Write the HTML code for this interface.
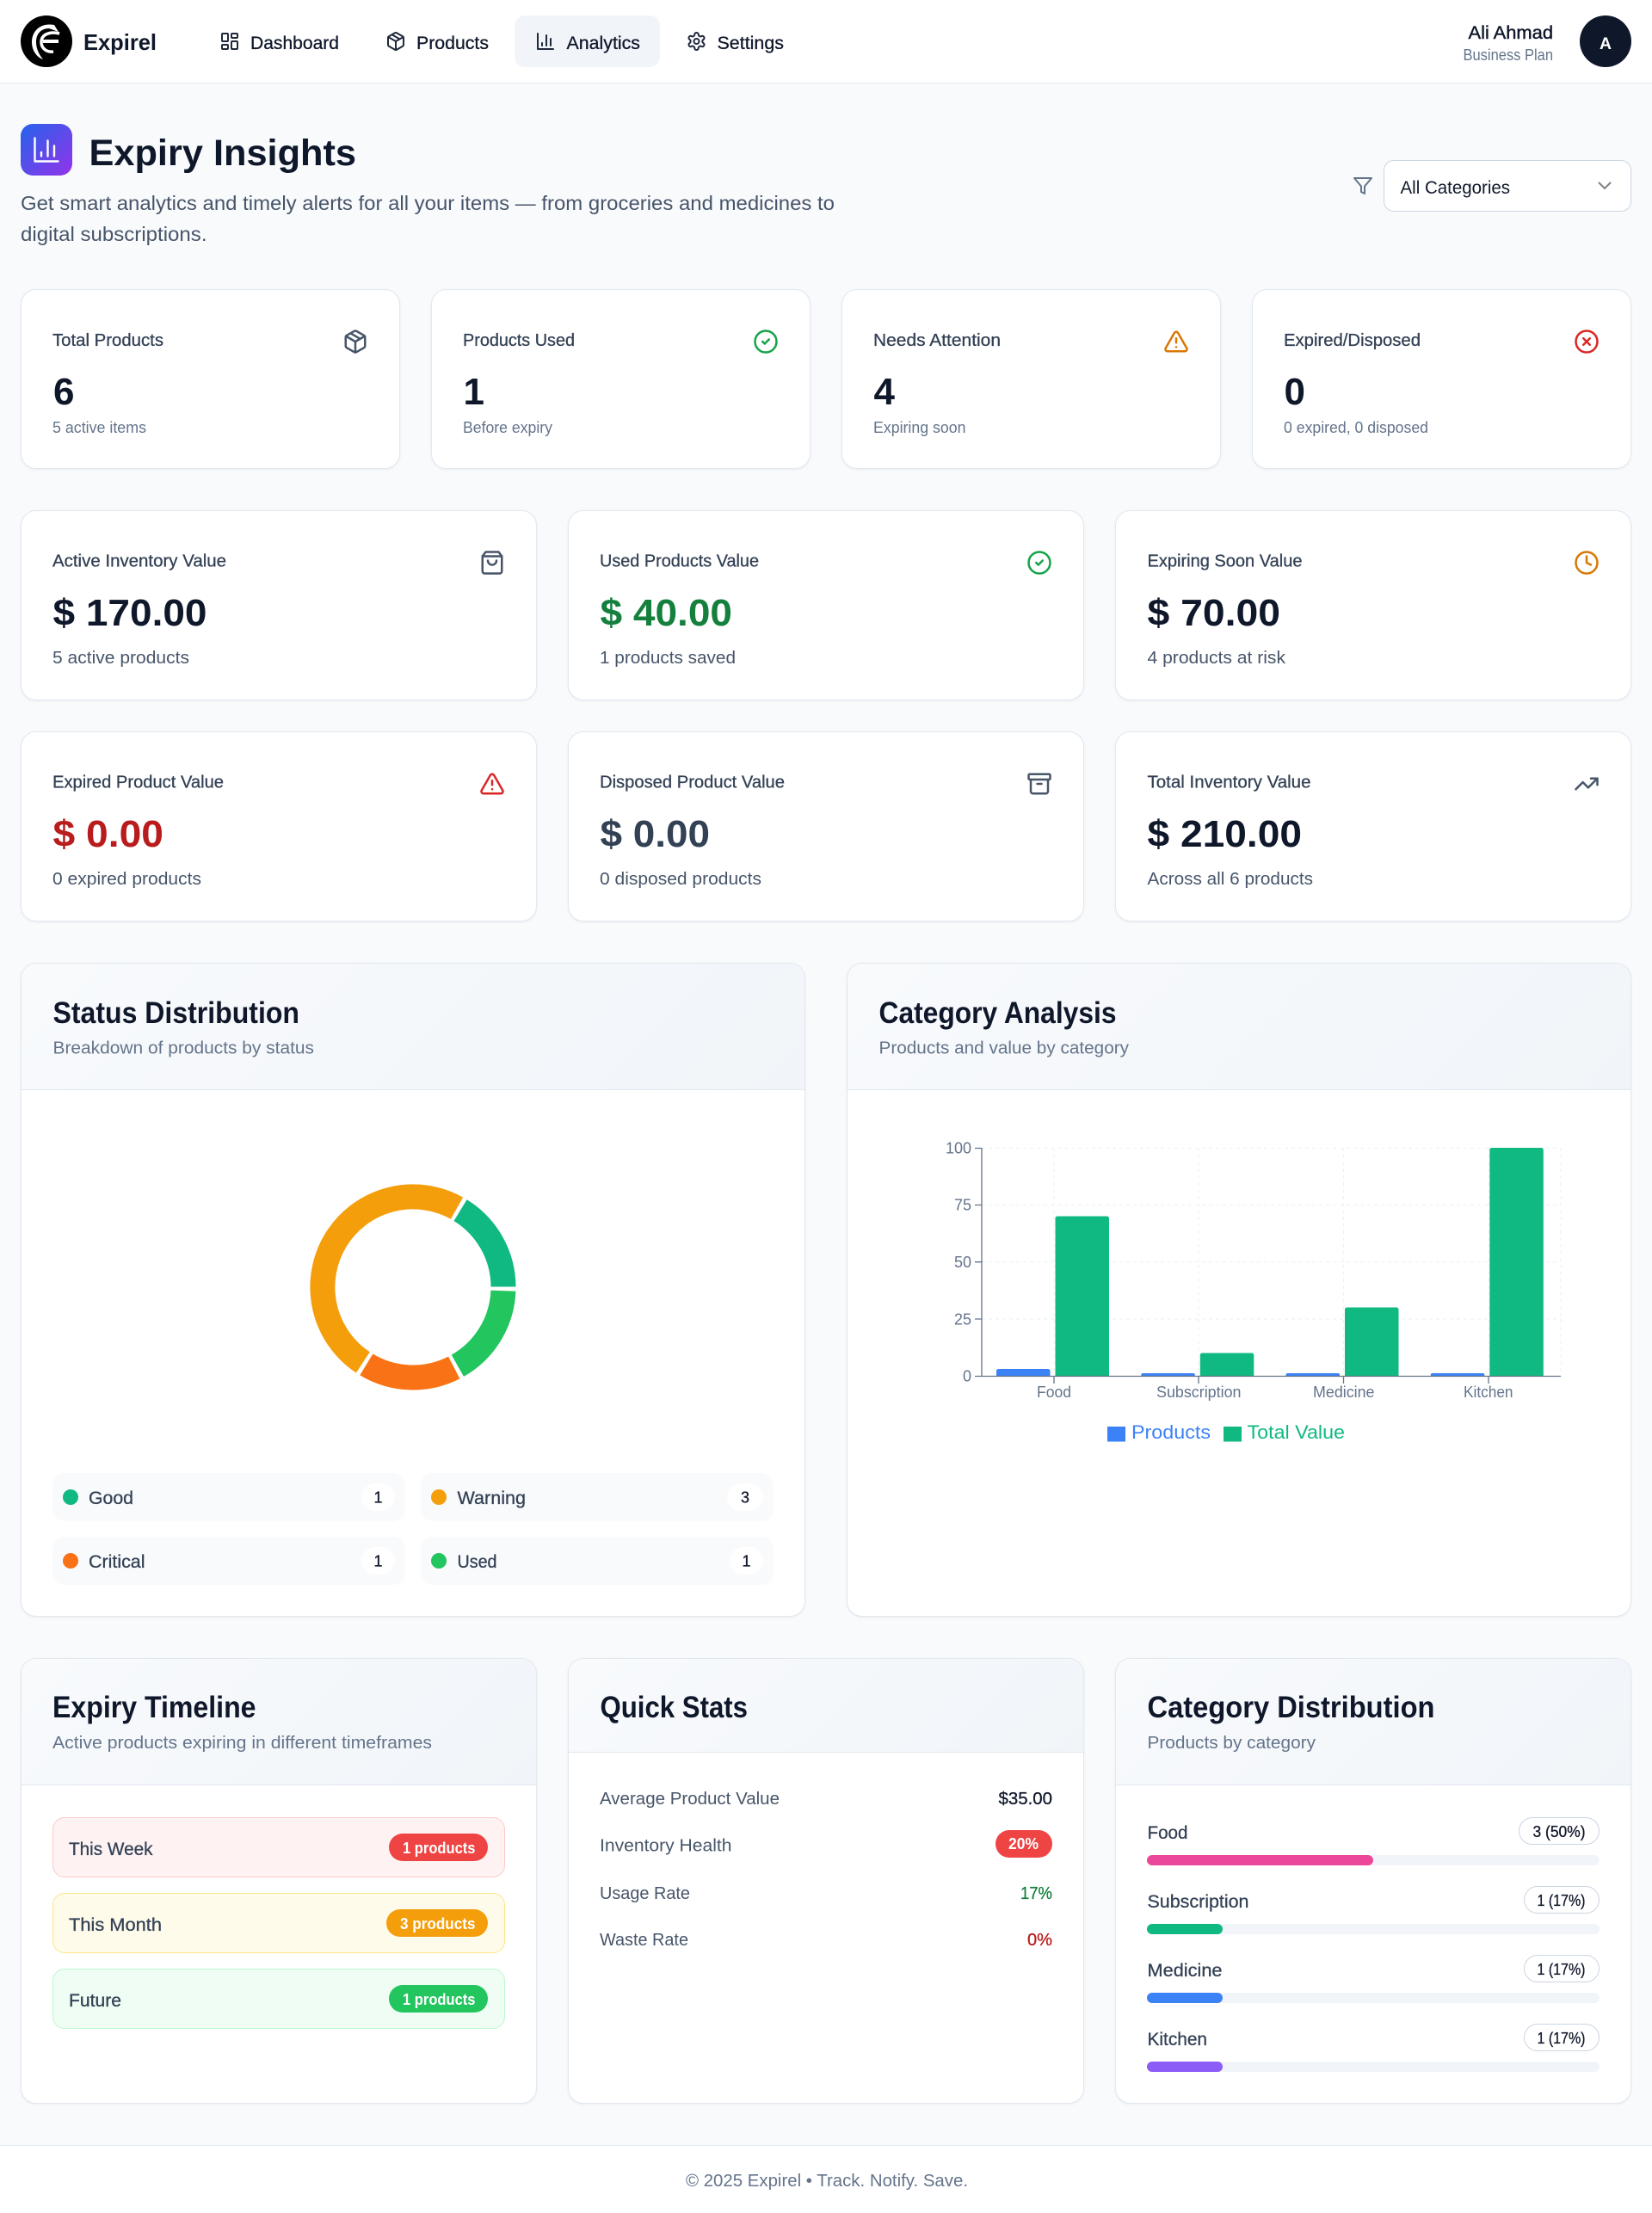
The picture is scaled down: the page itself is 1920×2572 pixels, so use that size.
<!DOCTYPE html>
<html lang="en"><head><meta charset="utf-8"><title>Expiry Insights - Expirel</title>
<style>
html,body{margin:0;padding:0}
body{position:relative;width:1920px;height:2572px;overflow:hidden;background:#f8fafc;font-family:"Liberation Sans",sans-serif}
.a{position:absolute;box-sizing:border-box}
.card{background:#fff;border:1px solid #e2e8f0;border-radius:18px;box-shadow:0 1px 3px rgba(15,23,42,.06);overflow:hidden}
.hd{position:absolute;box-sizing:border-box;left:0;top:0;right:0;background:linear-gradient(135deg,#f8fafc,#f1f5f9);border-bottom:1px solid #e2e8f0}
.tile{background:#f8fafc;border-radius:14px;height:56px}
.dot{width:18px;height:18px;border-radius:50%}
.bdg{background:#fff;border-radius:16px;height:32px}
.pill{border-radius:16px;height:32px}
.it{border-radius:14px;height:70px;left:61px;width:526px;border-style:solid;border-width:1px}
.trk{left:1333px;width:526px;height:12px;background:#f1f5f9;border-radius:6px}
.fil{left:1333px;height:12px;border-radius:6px}
.op{border:1.5px solid #cbd5e1;background:#fff;border-radius:16px;height:32px}
svg text{font-family:"Liberation Sans",sans-serif;white-space:pre}
.m{stroke:currentColor;stroke-width:.3px;fill:currentColor}
.r{fill:currentColor}
.b{font-weight:700;fill:currentColor}
.k0{color:#0f172a}.k1{color:#334155}.k2{color:#475569}.k3{color:#64748b}
.g{color:#15803d}.d{color:#b91c1c}.w{color:#fff}
.i{fill:none;stroke-width:2;stroke-linecap:round;stroke-linejoin:round}
</style></head><body>

<div class="a" style="left:0;top:0;width:1920px;height:97px;background:#fff;border-bottom:1px solid #e2e8f0"></div>
<div class="a" style="left:598px;top:18px;width:169px;height:60px;background:#f1f5f9;border-radius:12px"></div>
<div class="a" style="left:24px;top:144px;width:60px;height:60px;border-radius:14px;background:linear-gradient(135deg,#2563eb,#9333ea)"></div>
<div class="a" style="left:1836px;top:18px;width:60px;height:60px;border-radius:50%;background:#0f172a"></div>
<div class="a" style="left:1608px;top:186px;width:288px;height:60px;background:#fff;border:1px solid #cbd5e1;border-radius:12px"></div>

<div class="a card" style="left:24px;top:336px;width:441px;height:209px"></div>
<div class="a card" style="left:501px;top:336px;width:441px;height:209px"></div>
<div class="a card" style="left:978px;top:336px;width:441px;height:209px"></div>
<div class="a card" style="left:1455px;top:336px;width:441px;height:209px"></div>

<div class="a card" style="left:24px;top:593px;width:600px;height:221px"></div>
<div class="a card" style="left:660px;top:593px;width:600px;height:221px"></div>
<div class="a card" style="left:1296px;top:593px;width:600px;height:221px"></div>
<div class="a card" style="left:24px;top:850px;width:600px;height:221px"></div>
<div class="a card" style="left:660px;top:850px;width:600px;height:221px"></div>
<div class="a card" style="left:1296px;top:850px;width:600px;height:221px"></div>

<div class="a card" style="left:24px;top:1119px;width:912px;height:760px"><div class="hd" style="height:147px"></div></div>
<div class="a card" style="left:984px;top:1119px;width:912px;height:760px"><div class="hd" style="height:147px"></div></div>

<div class="a tile" style="left:61px;top:1712px;width:410px"></div>
<div class="a tile" style="left:489px;top:1712px;width:410px"></div>
<div class="a tile" style="left:61px;top:1786px;width:410px"></div>
<div class="a tile" style="left:489px;top:1786px;width:410px"></div>
<div class="a dot" style="left:73px;top:1731px;background:#10b981"></div>
<div class="a dot" style="left:501px;top:1731px;background:#f59e0b"></div>
<div class="a dot" style="left:73px;top:1805px;background:#f97316"></div>
<div class="a dot" style="left:501px;top:1805px;background:#22c55e"></div>
<div class="a bdg" style="left:420px;top:1724px;width:39px"></div>
<div class="a bdg" style="left:845px;top:1724px;width:42px"></div>
<div class="a bdg" style="left:420px;top:1798px;width:39px"></div>
<div class="a bdg" style="left:848px;top:1798px;width:39px"></div>

<div class="a card" style="left:24px;top:1927px;width:600px;height:518px"><div class="hd" style="height:147px"></div></div>
<div class="a card" style="left:660px;top:1927px;width:600px;height:518px"><div class="hd" style="height:109px"></div></div>
<div class="a card" style="left:1296px;top:1927px;width:600px;height:518px"><div class="hd" style="height:147px"></div></div>

<div class="a it" style="top:2112px;background:#fef2f2;border-color:#fecaca"></div>
<div class="a it" style="top:2200px;background:#fffbeb;border-color:#fde68a"></div>
<div class="a it" style="top:2288px;background:#f0fdf4;border-color:#bbf7d0"></div>
<div class="a pill" style="left:452px;top:2131px;width:115px;background:#ef4444"></div>
<div class="a pill" style="left:449px;top:2219px;width:118px;background:#f59e0b"></div>
<div class="a pill" style="left:452px;top:2307px;width:115px;background:#22c55e"></div>
<div class="a pill" style="left:1157px;top:2127px;width:66px;background:#ef4444"></div>

<div class="a op" style="left:1765px;top:2112px;width:94px"></div>
<div class="a op" style="left:1771px;top:2192px;width:88px"></div>
<div class="a op" style="left:1771px;top:2272px;width:88px"></div>
<div class="a op" style="left:1771px;top:2352px;width:88px"></div>
<div class="a trk" style="top:2156px"></div><div class="a fil" style="top:2156px;width:263px;background:#ec4899"></div>
<div class="a trk" style="top:2236px"></div><div class="a fil" style="top:2236px;width:88px;background:#10b981"></div>
<div class="a trk" style="top:2316px"></div><div class="a fil" style="top:2316px;width:88px;background:#3b82f6"></div>
<div class="a trk" style="top:2396px"></div><div class="a fil" style="top:2396px;width:88px;background:#8b5cf6"></div>

<div class="a" style="left:0;top:2493px;width:1920px;height:79px;background:#fff;border-top:1px solid #e2e8f0"></div>

<svg class="a" style="left:0;top:0" width="1920" height="2572" viewBox="0 0 1920 2572" xmlns="http://www.w3.org/2000/svg">
<defs>
<symbol id="dash" viewBox="0 0 24 24"><rect x="3" y="3" width="7" height="9" rx="1"/><rect x="14" y="3" width="7" height="5" rx="1"/><rect x="14" y="12" width="7" height="9" rx="1"/><rect x="3" y="16" width="7" height="5" rx="1"/></symbol>
<symbol id="pkg" viewBox="0 0 24 24"><path d="m7.5 4.27 9 5.15"/><path d="M21 8a2 2 0 0 0-1-1.73l-7-4a2 2 0 0 0-2 0l-7 4A2 2 0 0 0 3 8v8a2 2 0 0 0 1 1.73l7 4a2 2 0 0 0 2 0l7-4A2 2 0 0 0 21 16Z"/><path d="m3.3 7 8.7 5 8.7-5"/><path d="M12 22V12"/></symbol>
<symbol id="bars" viewBox="0 0 24 24"><path d="M3 3v18h18"/><path d="M18 17V9"/><path d="M13 17V5"/><path d="M8 17v-3"/></symbol>
<symbol id="gear" viewBox="0 0 24 24"><path d="M12.22 2h-.44a2 2 0 0 0-2 2v.18a2 2 0 0 1-1 1.73l-.43.25a2 2 0 0 1-2 0l-.15-.08a2 2 0 0 0-2.73.73l-.22.38a2 2 0 0 0 .73 2.73l.15.1a2 2 0 0 1 1 1.72v.51a2 2 0 0 1-1 1.74l-.15.09a2 2 0 0 0-.73 2.73l.22.38a2 2 0 0 0 2.73.73l.15-.08a2 2 0 0 1 2 0l.43.25a2 2 0 0 1 1 1.73V20a2 2 0 0 0 2 2h.44a2 2 0 0 0 2-2v-.18a2 2 0 0 1 1-1.73l.43-.25a2 2 0 0 1 2 0l.15.08a2 2 0 0 0 2.73-.73l.22-.39a2 2 0 0 0-.73-2.73l-.15-.08a2 2 0 0 1-1-1.74v-.5a2 2 0 0 1 1-1.74l.15-.09a2 2 0 0 0 .73-2.73l-.22-.38a2 2 0 0 0-2.73-.73l-.15.08a2 2 0 0 1-2 0l-.43-.25a2 2 0 0 1-1-1.73V4a2 2 0 0 0-2-2z"/><circle cx="12" cy="12" r="3"/></symbol>
<symbol id="filt" viewBox="0 0 24 24"><polygon points="22 3 2 3 10 12.46 10 19 14 21 14 12.46 22 3"/></symbol>
<symbol id="chk" viewBox="0 0 24 24"><circle cx="12" cy="12" r="10"/><path d="m9 12 2 2 4-4"/></symbol>
<symbol id="warn" viewBox="0 0 24 24"><path d="m21.73 18-8-14a2 2 0 0 0-3.48 0l-8 14A2 2 0 0 0 4 21h16a2 2 0 0 0 1.73-3Z"/><path d="M12 9v4"/><path d="M12 17h.01"/></symbol>
<symbol id="xc" viewBox="0 0 24 24"><circle cx="12" cy="12" r="10"/><path d="m15 9-6 6"/><path d="m9 9 6 6"/></symbol>
<symbol id="bag" viewBox="0 0 24 24"><path d="M6 2 3 6v14a2 2 0 0 0 2 2h14a2 2 0 0 0 2-2V6l-3-4Z"/><path d="M3 6h18"/><path d="M16 10a4 4 0 0 1-8 0"/></symbol>
<symbol id="clk" viewBox="0 0 24 24"><circle cx="12" cy="12" r="10"/><polyline points="12 6 12 12 16 14"/></symbol>
<symbol id="arc" viewBox="0 0 24 24"><rect x="2" y="3" width="20" height="5" rx="1"/><path d="M4 8v11a2 2 0 0 0 2 2h12a2 2 0 0 0 2-2V8"/><path d="M10 12h4"/></symbol>
<symbol id="trn" viewBox="0 0 24 24"><polyline points="22 7 13.5 15.5 8.5 10.5 2 17"/><polyline points="16 7 22 7 22 13"/></symbol>
</defs>

<!-- logo -->
<circle cx="54" cy="48" r="30" fill="#000"/>
<path d="M63 29C47 26 37 36 37 49C37 60 44 67 50 69C45 63 42 56 42 49C42 39 48 33 57 33L68 37Z" fill="#fff"/>
<path d="M69 39C58 36 48 40 48 49C48 56 54 61 62 60" fill="none" stroke="#fff" stroke-width="3.5"/>
<path d="M50 48H68" stroke="#fff" stroke-width="4"/>

<text class="b k0" x="97" y="58" font-size="26" textLength="85" lengthAdjust="spacingAndGlyphs">Expirel</text>

<!-- nav -->
<use href="#dash" x="255" y="36" width="24" height="24" class="i" stroke="#1e293b"/>
<use href="#pkg" x="448" y="36" width="24" height="24" class="i" stroke="#1e293b"/>
<use href="#bars" x="622" y="36" width="24" height="24" class="i" stroke="#1e293b"/>
<use href="#gear" x="797.5" y="36" width="24" height="24" class="i" stroke="#1e293b"/>
<text class="m k0" x="291" y="57" font-size="21.5" textLength="103" lengthAdjust="spacingAndGlyphs">Dashboard</text>
<text class="m k0" x="484" y="57" font-size="21.5" textLength="84" lengthAdjust="spacingAndGlyphs">Products</text>
<text class="m k0" x="658.5" y="57" font-size="21.5" textLength="85.5" lengthAdjust="spacingAndGlyphs">Analytics</text>
<text class="m k0" x="833.5" y="57" font-size="21.5" textLength="77.5" lengthAdjust="spacingAndGlyphs">Settings</text>

<text class="m k0" x="1706.5" y="45" font-size="21.5" textLength="98.5" lengthAdjust="spacingAndGlyphs" style="stroke-width:.45px">Ali Ahmad</text>
<text class="r k3" x="1700.5" y="70" font-size="18" textLength="104.5" lengthAdjust="spacingAndGlyphs">Business Plan</text>
<text class="b w" x="1859" y="57" font-size="19" textLength="14" lengthAdjust="spacingAndGlyphs">A</text>

<!-- title -->
<use href="#bars" x="36" y="156" width="36" height="36" class="i" stroke="#fff" style="stroke-width:1.6"/>
<text class="b k0" x="103.5" y="192" font-size="43" textLength="310.5" lengthAdjust="spacingAndGlyphs">Expiry Insights</text>
<text class="r k2" x="24" y="244" font-size="23.5" textLength="946" lengthAdjust="spacingAndGlyphs">Get smart analytics and timely alerts for all your items — from groceries and medicines to</text>
<text class="r k2" x="24" y="280" font-size="23.5" textLength="216.5" lengthAdjust="spacingAndGlyphs">digital subscriptions.</text>

<use href="#filt" x="1572" y="204" width="24" height="24" class="i" stroke="#64748b"/>
<text class="r k0" x="1627.5" y="225" font-size="21.5" textLength="127.5" lengthAdjust="spacingAndGlyphs">All Categories</text>
<path d="M1858 212l7 7 7-7" fill="none" stroke="#808080" stroke-width="2"/>

<!-- stat cards -->
<use href="#pkg" x="398" y="382" width="30" height="30" class="i" stroke="#475569"/>
<use href="#chk" x="875" y="382" width="30" height="30" class="i" stroke="#16a34a"/>
<use href="#warn" x="1352" y="382" width="30" height="30" class="i" stroke="#d97706"/>
<use href="#xc" x="1829" y="382" width="30" height="30" class="i" stroke="#dc2626"/>
<text class="m k1" x="61" y="402" font-size="20" textLength="129" lengthAdjust="spacingAndGlyphs">Total Products</text>
<text class="m k1" x="538" y="402" font-size="20" textLength="130" lengthAdjust="spacingAndGlyphs">Products Used</text>
<text class="m k1" x="1015" y="402" font-size="20" textLength="148" lengthAdjust="spacingAndGlyphs">Needs Attention</text>
<text class="m k1" x="1492" y="402" font-size="20" textLength="159" lengthAdjust="spacingAndGlyphs">Expired/Disposed</text>
<text class="b k0" x="62" y="470" font-size="44">6</text>
<text class="b k0" x="538.5" y="470" font-size="44">1</text>
<text class="b k0" x="1015.5" y="470" font-size="44">4</text>
<text class="b k0" x="1492.5" y="470" font-size="44">0</text>
<text class="r k3" x="61" y="503" font-size="18" textLength="109" lengthAdjust="spacingAndGlyphs">5 active items</text>
<text class="r k3" x="538" y="503" font-size="18" textLength="104" lengthAdjust="spacingAndGlyphs">Before expiry</text>
<text class="r k3" x="1015" y="503" font-size="18" textLength="107.500" lengthAdjust="spacingAndGlyphs">Expiring soon</text>
<text class="r k3" x="1492" y="503" font-size="18" textLength="168" lengthAdjust="spacingAndGlyphs">0 expired, 0 disposed</text>

<!-- value cards -->
<use href="#bag" x="557" y="639" width="30" height="30" class="i" stroke="#475569"/>
<use href="#chk" x="1193" y="639" width="30" height="30" class="i" stroke="#16a34a"/>
<use href="#clk" x="1829" y="639" width="30" height="30" class="i" stroke="#d97706"/>
<use href="#warn" x="557" y="896" width="30" height="30" class="i" stroke="#dc2626"/>
<use href="#arc" x="1193" y="896" width="30" height="30" class="i" stroke="#475569"/>
<use href="#trn" x="1829" y="896" width="30" height="30" class="i" stroke="#475569"/>
<text class="m k1" x="61" y="658.5" font-size="20" textLength="202" lengthAdjust="spacingAndGlyphs">Active Inventory Value</text>
<text class="m k1" x="697" y="658.5" font-size="20" textLength="185" lengthAdjust="spacingAndGlyphs">Used Products Value</text>
<text class="m k1" x="1333.5" y="658.5" font-size="20" textLength="180" lengthAdjust="spacingAndGlyphs">Expiring Soon Value</text>
<text class="m k1" x="61" y="915.5" font-size="20" textLength="199" lengthAdjust="spacingAndGlyphs">Expired Product Value</text>
<text class="m k1" x="697" y="915.5" font-size="20" textLength="215" lengthAdjust="spacingAndGlyphs">Disposed Product Value</text>
<text class="m k1" x="1333.5" y="915.5" font-size="20" textLength="190" lengthAdjust="spacingAndGlyphs">Total Inventory Value</text>
<text class="b k0" x="61.5" y="727" font-size="44" textLength="179" lengthAdjust="spacingAndGlyphs">$ 170.00</text>
<text class="b g" x="697.5" y="727" font-size="44" textLength="153.5" lengthAdjust="spacingAndGlyphs">$ 40.00</text>
<text class="b k0" x="1333.5" y="727" font-size="44" textLength="154.5" lengthAdjust="spacingAndGlyphs">$ 70.00</text>
<text class="b d" x="61.5" y="984" font-size="44" textLength="128.5" lengthAdjust="spacingAndGlyphs">$ 0.00</text>
<text class="b k1" x="697.5" y="984" font-size="44" textLength="127.5" lengthAdjust="spacingAndGlyphs">$ 0.00</text>
<text class="b k0" x="1333.5" y="984" font-size="44" textLength="179.5" lengthAdjust="spacingAndGlyphs">$ 210.00</text>
<text class="r k2" x="61" y="771" font-size="20.5" textLength="159" lengthAdjust="spacingAndGlyphs">5 active products</text>
<text class="r k2" x="697" y="771" font-size="20.5" textLength="158" lengthAdjust="spacingAndGlyphs">1 products saved</text>
<text class="r k2" x="1333.5" y="771" font-size="20.5" textLength="160.5" lengthAdjust="spacingAndGlyphs">4 products at risk</text>
<text class="r k2" x="61" y="1028" font-size="20.5" textLength="173" lengthAdjust="spacingAndGlyphs">0 expired products</text>
<text class="r k2" x="697" y="1028" font-size="20.5" textLength="188" lengthAdjust="spacingAndGlyphs">0 disposed products</text>
<text class="r k2" x="1333.5" y="1028" font-size="20.5" textLength="192.5" lengthAdjust="spacingAndGlyphs">Across all 6 products</text>

<!-- chart headers -->
<text class="b k0" x="61.5" y="1189" font-size="35" textLength="286.5" lengthAdjust="spacingAndGlyphs">Status Distribution</text>
<text class="r k3" x="61.5" y="1224.5" font-size="20.5" textLength="303.5" lengthAdjust="spacingAndGlyphs">Breakdown of products by status</text>
<text class="b k0" x="1021.5" y="1189" font-size="35" textLength="276" lengthAdjust="spacingAndGlyphs">Category Analysis</text>
<text class="r k3" x="1021.5" y="1224.5" font-size="20.5" textLength="290.5" lengthAdjust="spacingAndGlyphs">Products and value by category</text>

<!-- donut -->
<g transform="translate(480 1496)" stroke="#fff" stroke-width="1">
<path fill="#10b981" d="M120,0A120,120 0 0 0 62.45,-102.47L46.84,-76.85A90,90 0 0 1 90,0Z"/>
<path fill="#f59e0b" d="M58.79,-104.62A120,120 0 0 0 -65.94,100.26L-49.46,75.20A90,90 0 0 1 44.09,-78.46Z"/>
<path fill="#f97316" d="M-62.45,102.47A120,120 0 0 0 55.10,106.60L41.33,79.95A90,90 0 0 1 -46.84,76.85Z"/>
<path fill="#22c55e" d="M58.79,104.62A120,120 0 0 0 119.93,4.19L89.95,3.14A90,90 0 0 1 44.09,78.46Z"/>
</g>

<!-- legend tiles -->
<text class="m k1" x="103" y="1748" font-size="21.5" textLength="52" lengthAdjust="spacingAndGlyphs">Good</text>
<text class="m k1" x="531.5" y="1748" font-size="21.5" textLength="79.5" lengthAdjust="spacingAndGlyphs">Warning</text>
<text class="m k1" x="103" y="1822" font-size="21.5" textLength="65.5" lengthAdjust="spacingAndGlyphs">Critical</text>
<text class="m k1" x="531.5" y="1822" font-size="21.5" textLength="46" lengthAdjust="spacingAndGlyphs">Used</text>
<text class="m k0" x="439.5" y="1746.5" font-size="18" text-anchor="middle">1</text>
<text class="m k0" x="866" y="1746.5" font-size="18" text-anchor="middle">3</text>
<text class="m k0" x="439.5" y="1820.5" font-size="18" text-anchor="middle">1</text>
<text class="m k0" x="867.5" y="1820.5" font-size="18" text-anchor="middle">1</text>

<!-- bar chart -->
<g stroke="#eef2f7" stroke-width="1.2" stroke-dasharray="4 4" fill="none">
<path d="M1141 1334.5H1814M1141 1400.5H1814M1141 1466.7H1814M1141 1533H1814"/>
<path d="M1225 1334V1599M1393 1334V1599M1561.5 1334V1599M1730 1334V1599M1814 1334V1599"/>
</g>
<g fill="#3b82f6">
<path d="M1158 1599V1593.5a2.5 2.5 0 0 1 2.5-2.5H1218a2.5 2.5 0 0 1 2.5 2.5V1599Z"/>
<path d="M1326.3 1599V1598a2 2 0 0 1 2-2H1386.8a2 2 0 0 1 2 2V1599Z"/>
<path d="M1494.5 1599V1598a2 2 0 0 1 2-2H1555a2 2 0 0 1 2 2V1599Z"/>
<path d="M1662.8 1599V1598a2 2 0 0 1 2-2H1723.3a2 2 0 0 1 2 2V1599Z"/>
</g>
<g fill="#10b981">
<path d="M1226.5 1599V1416a2.5 2.5 0 0 1 2.5-2.5H1286.5a2.5 2.5 0 0 1 2.5 2.5V1599Z"/>
<path d="M1394.8 1599V1575a2.5 2.5 0 0 1 2.5-2.5H1454.8a2.5 2.5 0 0 1 2.5 2.5V1599Z"/>
<path d="M1563 1599V1522a2.5 2.5 0 0 1 2.5-2.5H1623a2.5 2.5 0 0 1 2.5 2.5V1599Z"/>
<path d="M1731.3 1599V1336.5a2.5 2.5 0 0 1 2.5-2.5H1791.3a2.5 2.5 0 0 1 2.5 2.5V1599Z"/>
</g>
<g stroke="#64748b" stroke-width="1.3" fill="none">
<path d="M1141 1334V1599.5H1814"/>
<path d="M1133 1334.5H1141M1133 1400.5H1141M1133 1466.7H1141M1133 1533H1141M1133 1599.5H1141"/>
<path d="M1225 1599V1608M1393 1599V1608M1561.5 1599V1608M1730 1599V1608"/>
</g>
<g font-size="18">
<text class="r k3" x="1129" y="1340.5" text-anchor="end">100</text>
<text class="r k3" x="1129" y="1406.5" text-anchor="end">75</text>
<text class="r k3" x="1129" y="1473" text-anchor="end">50</text>
<text class="r k3" x="1129" y="1539.5" text-anchor="end">25</text>
<text class="r k3" x="1129" y="1605.5" text-anchor="end">0</text>
<text class="r k3" x="1205" y="1624" textLength="40" lengthAdjust="spacingAndGlyphs">Food</text>
<text class="r k3" x="1344" y="1624" textLength="98.5" lengthAdjust="spacingAndGlyphs">Subscription</text>
<text class="r k3" x="1526" y="1624" textLength="71.5" lengthAdjust="spacingAndGlyphs">Medicine</text>
<text class="r k3" x="1701" y="1624" textLength="57.5" lengthAdjust="spacingAndGlyphs">Kitchen</text>
</g>
<rect x="1287" y="1658" width="21" height="17.5" fill="#3b82f6"/>
<text x="1315" y="1672" font-size="22" fill="#3b82f6" textLength="92" lengthAdjust="spacingAndGlyphs">Products</text>
<rect x="1422" y="1658" width="21" height="17.5" fill="#10b981"/>
<text x="1449.5" y="1672" font-size="22" fill="#10b981" textLength="113.5" lengthAdjust="spacingAndGlyphs">Total Value</text>

<!-- row 4 headers -->
<text class="b k0" x="61" y="1996" font-size="35" textLength="236.5" lengthAdjust="spacingAndGlyphs">Expiry Timeline</text>
<text class="r k3" x="61" y="2032" font-size="20.5" textLength="441" lengthAdjust="spacingAndGlyphs">Active products expiring in different timeframes</text>
<text class="b k0" x="697.5" y="1996" font-size="35" textLength="171.5" lengthAdjust="spacingAndGlyphs">Quick Stats</text>
<text class="b k0" x="1333.5" y="1996" font-size="35" textLength="334" lengthAdjust="spacingAndGlyphs">Category Distribution</text>
<text class="r k3" x="1333.5" y="2032" font-size="20.5" textLength="195.5" lengthAdjust="spacingAndGlyphs">Products by category</text>

<!-- timeline -->
<text class="m k1" x="80" y="2156" font-size="21.5" textLength="97.5" lengthAdjust="spacingAndGlyphs">This Week</text>
<text class="m k1" x="80" y="2244" font-size="21.5" textLength="108" lengthAdjust="spacingAndGlyphs">This Month</text>
<text class="m k1" x="80" y="2332" font-size="21.5" textLength="61" lengthAdjust="spacingAndGlyphs">Future</text>
<text class="b w" x="468" y="2154" font-size="18" textLength="84.5" lengthAdjust="spacingAndGlyphs">1 products</text>
<text class="b w" x="465" y="2242" font-size="18" textLength="87.5" lengthAdjust="spacingAndGlyphs">3 products</text>
<text class="b w" x="468" y="2330" font-size="18" textLength="84.5" lengthAdjust="spacingAndGlyphs">1 products</text>

<!-- quick stats -->
<text class="r k2" x="697" y="2097" font-size="20.5" textLength="209" lengthAdjust="spacingAndGlyphs">Average Product Value</text>
<text class="r k2" x="697" y="2151.5" font-size="20.5" textLength="153.5" lengthAdjust="spacingAndGlyphs">Inventory Health</text>
<text class="r k2" x="697" y="2207" font-size="20.5" textLength="105" lengthAdjust="spacingAndGlyphs">Usage Rate</text>
<text class="r k2" x="697" y="2261" font-size="20.5" textLength="103" lengthAdjust="spacingAndGlyphs">Waste Rate</text>
<text class="m k0" x="1160.5" y="2097" font-size="20.5" textLength="62.5" lengthAdjust="spacingAndGlyphs">$35.00</text>
<text class="b w" x="1172" y="2149" font-size="18" textLength="35" lengthAdjust="spacingAndGlyphs">20%</text>
<text class="m g" x="1186" y="2207" font-size="20.5" textLength="37" lengthAdjust="spacingAndGlyphs">17%</text>
<text class="m d" x="1194" y="2261" font-size="20.5" textLength="29" lengthAdjust="spacingAndGlyphs">0%</text>

<!-- category distribution -->
<text class="m k1" x="1333.5" y="2137" font-size="21.5" textLength="47" lengthAdjust="spacingAndGlyphs">Food</text>
<text class="m k1" x="1333.5" y="2217" font-size="21.5" textLength="118" lengthAdjust="spacingAndGlyphs">Subscription</text>
<text class="m k1" x="1333.5" y="2297" font-size="21.5" textLength="87" lengthAdjust="spacingAndGlyphs">Medicine</text>
<text class="m k1" x="1333.5" y="2377" font-size="21.5" textLength="69.5" lengthAdjust="spacingAndGlyphs">Kitchen</text>
<text class="m k0" x="1781.5" y="2135" font-size="18" textLength="61" lengthAdjust="spacingAndGlyphs">3 (50%)</text>
<text class="m k0" x="1786.5" y="2215" font-size="18" textLength="56" lengthAdjust="spacingAndGlyphs">1 (17%)</text>
<text class="m k0" x="1786.5" y="2295" font-size="18" textLength="56" lengthAdjust="spacingAndGlyphs">1 (17%)</text>
<text class="m k0" x="1786.5" y="2375" font-size="18" textLength="56" lengthAdjust="spacingAndGlyphs">1 (17%)</text>

<text class="r k3" x="797" y="2541" font-size="20" textLength="328" lengthAdjust="spacingAndGlyphs">© 2025 Expirel • Track. Notify. Save.</text>
</svg>
</body></html>
